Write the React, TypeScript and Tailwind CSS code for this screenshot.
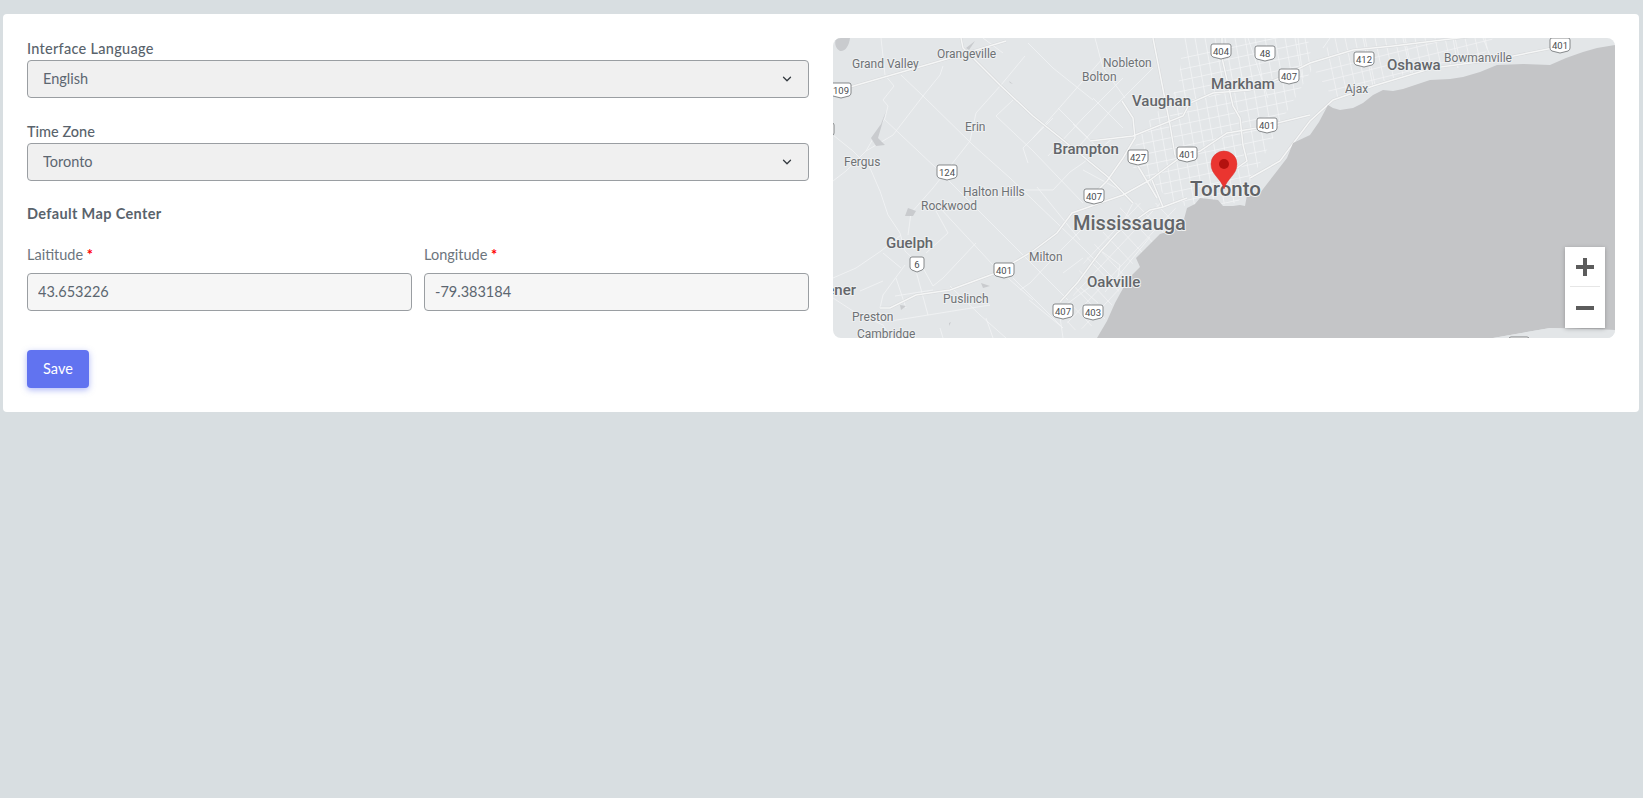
import React from "react";
import { ChevronDown } from "lucide-react";

const COAST = "M264,300 L274,283 282,265 288,254 296,240 307,229 303,220 314,209 327,196 340,192 350,185 354,170 362,166 367,160 385,162 390,168 400,168 407,167 412,168 414,157 427,155 444,133 454,120 460,105 477,97 486,84 495,67 500,70 507,72 520,70 530,65 540,57 550,52 560,53 570,51 585,46 597,42 617,41 630,39 647,34 664,27 690,26 717,27 733,20 750,14 764,10 782,7 L782,292 717,290 660,300 Z";

const HIGHWAYS_LINES = [
  "M47,270 L57,270 83,257 117,252 163,235 200,213 224,195 239,175 270,164 290,157 317,142 337,127 344,122 367,113 394,95 424,90 477,77",
  "M320,0 L337,87 342,117",
  "M257,103 L300,98 350,78 357,65 380,55 417,52 447,40 477,25 520,12 560,8 650,-3",
  "M389,0 L389,20 400,68 407,80 410,107 414,123 404,130",
  "M227,264 L245,244 267,214 284,195 317,172 330,169 354,160",
  "M289,63 L300,80 302,100 290,120 274,143 262,155",
  "M302,123 L324,160",
  "M128,0 L130,10 167,47 200,78 230,102 275,139 300,165",
  "M17,49 L107,23 173,3",
  "M417,140 L447,123 477,83 500,62 540,48 600,30 660,22 720,10",
  "M319,142 L330,169",
];

const ROADS = [
  "M68,37 L90,58 140,107 177,140 250,210 290,250",
  "M110,28 L107,37 90,58 60,97 33,113 13,133 0,143",
  "M48,0 L52,37 61,48 50,62 55,68 52,80 33,113",
  "M50,80 L103,130 133,160 183,210 235,262",
  "M168,47 L143,75 137,103 100,150 78,175 75,197",
  "M192,18 L168,47",
  "M180,62 L163,78 200,113 250,165",
  "M0,97 L20,113 37,130 47,153 55,177 67,195 72,213 90,230 100,248",
  "M103,173 L115,195 93,215",
  "M143,205 L110,240 100,248",
  "M0,240 L23,230 48,213 68,197",
  "M72,227 L50,257 47,270",
  "M50,215 L68,230",
  "M63,240 L73,270",
  "M83,233 L95,277",
  "M27,253 L50,243",
  "M62,258 L100,252",
  "M0,260 L20,273 50,287 58,300",
  "M58,283 L157,267",
  "M107,290 L110,300",
  "M153,280 L160,300",
  "M117,248 L147,277 173,300",
  "M107,170 L160,227 200,262",
  "M180,240 L200,260 230,290",
  "M187,152 L220,152 237,134 250,125 280,100",
  "M250,132 L287,152 300,165 284,195",
  "M267,212 L287,227 285,239",
  "M230,300 L227,279",
  "M272,254 L317,199",
  "M187,252 L197,245 230,210 250,190",
  "M204,149 L247,202",
  "M230,269 L262,245",
  "M247,249 L265,265",
  "M230,235 L250,220",
  "M196,262 L230,290",
  "M200,100 L235,60 270,20",
  "M215,118 L250,80 290,40",
  "M240,115 L280,70 320,30",
  "M195,125 L190,110 220,80",
  "M240,86 L265,110",
  "M225,70 L255,100",
  "M260,60 L290,90",
  "M262,0 L270,30 292,60",
  "M195,5 L220,30 260,62",
  "M150,0 L170,15",
  "M415,0 L435,60",
  "M465,0 L470,40",
  "M497,0 L490,10",
  "M530,0 L540,48",
  "M570,0 L578,35",
  "M620,0 L625,30",
  "M650,0 L660,25",
];

const HIGHWAY_SIGNS: [number, number, string][] = [
  [8, 52, "109"], [-9, 92, ""], [114, 134, "124"], [305, 119, "427"], [354, 116, "401"], [261, 158, "407"],
  [84, 226, "6"], [171, 232, "401"], [230, 273, "407"], [260, 274, "403"], [388, 13, "404"], [432, 15, "48"],
  [456, 38, "407"], [531, 21, "412"], [434, 87, "401"], [727, 7, "401"], [686, 306, ""],
];

const SMALL: [number, number, string][] = [
  [104, 20, "Orangeville"], [19, 30, "Grand Valley"], [270, 29, "Nobleton"], [249, 43, "Bolton"], [132, 93, "Erin"],
  [11, 128, "Fergus"], [130, 158, "Halton Hills"], [88, 172, "Rockwood"], [196, 223, "Milton"], [110, 265, "Puslinch"],
  [19, 283, "Preston"], [24, 300, "Cambridge"], [611, 24, "Bowmanville"], [512, 55, "Ajax"],
];

const MEDIUM: [number, number, string][] = [
  [299, 68, "Vaughan"], [378, 51, "Markham"], [220, 116, "Brampton"], [53, 210, "Guelph"], [254, 249, "Oakville"], [554, 32, "Oshawa"],
];

const TORONTO_V = [292, 302, 312, 322, 332, 342, 352, 362, 372, 382, 392, 402, 412, 422, 432, 442, 452, 462, 472];
const TORONTO_H = [10, 21, 32, 43, 54, 65, 76, 87, 98, 109, 120, 131, 142, 153, 164];
const PEEL_A = [-60, -50, -40, -30, -20, -10, 0, 10, 20, 30, 40, 50, 60];

function MapDrawing() {
  return (
    <svg viewBox="0 0 782 300" className="block h-full w-full">
      <defs>
        <clipPath id="toronto-grid">
          <path d="M295,125 L310,90 345,50 350,0 475,0 480,30 450,80 430,120 405,165 345,168 Z" />
        </clipPath>
        <clipPath id="peel-grid">
          <path d="M232,295 L245,235 262,205 290,165 340,165 350,185 300,225 270,285 Z" />
        </clipPath>
        <clipPath id="east-grid">
          <path d="M480,30 L500,60 560,40 650,20 660,0 500,0 Z" />
        </clipPath>
      </defs>
      <rect width="782" height="300" fill="#e3e6e8" />
      <g fill="none" stroke="#f3f4f5" strokeWidth="0.8">
        {ROADS.map((d) => <path key={d} d={d} />)}
      </g>
      <g stroke="#f3f4f5" strokeWidth="0.75" clipPath="url(#toronto-grid)">
        {TORONTO_V.map((x) => <line key={x} x1={x} y1={0} x2={x + 30} y2={170} />)}
        {TORONTO_H.map((y) => <line key={y} x1={280} y1={y + 25} x2={490} y2={y - 20} />)}
      </g>
      <g stroke="#f3f4f5" strokeWidth="0.7" clipPath="url(#peel-grid)">
        {PEEL_A.map((o) => <line key={o} x1={200 + o * 2} y1={120} x2={370 + o * 2} y2={300} />)}
        {PEEL_A.map((o) => <line key={o} x1={200 + o * 2} y1={300} x2={370 + o * 2} y2={120} />)}
      </g>
      <g stroke="#f3f4f5" strokeWidth="0.7" clipPath="url(#east-grid)">
        {TORONTO_V.map((x) => <line key={x} x1={x + 200} y1={0} x2={x + 215} y2={70} />)}
        {TORONTO_H.map((y) => <line key={y} x1={480} y1={y + 25} x2={660} y2={y - 20} />)}
      </g>
      <g fill="none" stroke="#d7d9db" strokeWidth="2.6">
        {HIGHWAYS_LINES.map((d) => <path key={d} d={d} />)}
      </g>
      <g fill="none" stroke="#f5f6f6" strokeWidth="1.5">
        {HIGHWAYS_LINES.map((d) => <path key={d} d={d} />)}
      </g>
      <g fill="#c9cbce">
        <path d="M3,0 L17,0 C16,8 12,14 7,13 C3,11 1,6 3,0 Z" />
        <path d="M53,73 L48,86 38,100 43,108 52,107 45,100 50,83 Z" />
        <path d="M133,10 L142,3 136,12 Z" />
        <path d="M75,170 L83,173 80,178 72,178 Z" />
        <path d="M148,245 L157,248 150,250 Z" />
        <path d="M67,267 L73,268 68,272 Z" />
        <path d="M176,43 L180,46 177,45 Z" />
        <path d="M116,285 L118,284 116,288 Z" />
      </g>
      <path d={COAST} fill="#c4c5c7" />
      <path d="M660,300 L717,290 782,292 782,300 Z" fill="#e3e6e8" />
      <g fontFamily="Roboto, sans-serif" textAnchor="middle" fontSize="9.5" fill="#4a4d50">
        {HIGHWAY_SIGNS.map(([x, y, t]) => (
          <g key={`${x}-${y}`} transform={`translate(${x},${y})`}>
            <path
              d={t.length === 1 ? "M-5,-7 H5 Q7,-7 7,-5 V3 Q7,5 5,6 L0,8 -5,6 Q-7,5 -7,3 V-5 Q-7,-7 -5,-7 Z" : "M-8,-7 H8 Q10,-7 10,-5 V3 Q10,5 8,6 L0,8 -8,6 Q-10,5 -10,3 V-5 Q-10,-7 -8,-7 Z"}
              fill="#ffffff"
              stroke="#6a6d70"
              strokeWidth="0.8"
            />
            {t ? <text x="0" y="3.5">{t}</text> : null}
          </g>
        ))}
      </g>
      <g fontFamily="Roboto, sans-serif" stroke="#eef0f1" strokeWidth="2" paintOrder="stroke" strokeLinejoin="round">
        {SMALL.map(([x, y, t]) => <text key={t} x={x} y={y} fontSize="12" fill="#6f7275">{t}</text>)}
        {MEDIUM.map(([x, y, t]) => <text key={t} x={x} y={y} fontSize="15" fontWeight="500" fill="#63666a">{t}</text>)}
        <text x="23" y="257" fontSize="15" fontWeight="500" fill="#63666a" textAnchor="end">Kitchener</text>
        <text x="240" y="192" fontSize="20" fontWeight="500" fill="#63666a">Mississauga</text>
        <text x="357" y="158" fontSize="20.5" fontWeight="500" fill="#5f6266">Toronto</text>
      </g>
      <path d="M391,151 C388,140 378,137 378,126 A13,13 0 0 1 404,126 C404,137 394,140 391,151 Z" fill="#ea3530" stroke="#d9302c" strokeWidth="0.5" />
      <circle cx="391" cy="126" r="5" fill="#b3120f" />
    </svg>
  );
}

function SelectField({ label, value, labelClass }: { label: string; value: string; labelClass?: string }) {
  return (
    <div className="mb-6">
      <label className={`block pb-[2px] text-[14.5px] font-medium leading-[19px] text-[#59636c] ${labelClass ?? ""}`}>{label}</label>
      <div className="relative">
        <select
          defaultValue={value}
          className="block h-[38px] w-full appearance-none rounded border border-[#9a9ea2] bg-[#f0f0f0] pl-[15px] pr-8 text-[14.5px] text-[#5c6670] outline-none"
        >
          <option>{value}</option>
        </select>
        <ChevronDown className="pointer-events-none absolute right-[15px] top-[12px] h-[14px] w-[14px] text-[#343a40]" strokeWidth={2.2} />
      </div>
    </div>
  );
}

function CoordField({ label, value }: { label: string; value: string }) {
  return (
    <div>
      <label className="mb-2 block text-[14.5px] leading-[21px] text-[#6c757d]">
        {label} <span className="font-bold text-[#ff0000]">*</span>
      </label>
      <input
        defaultValue={value}
        className="block h-[38px] w-full rounded border border-[#9a9ea2] bg-[#f6f6f6] px-[10px] pb-[2px] text-[14.5px] text-[#5c6670] outline-none"
      />
    </div>
  );
}

export default function App() {
  return (
    <div className="min-h-[798px] bg-[#d8dee1] pb-px pl-[3px] pr-[4px] pt-[14px] font-['Lato',sans-serif]">
      <div className="grid grid-cols-2 gap-6 rounded bg-white p-6">
        <div className="pt-px">
          <SelectField label="Interface Language" value="English" labelClass="tracking-[0.28px]" />
          <SelectField label="Time Zone" value="Toronto" />
          <h2 className="-mt-[2px] mb-[20px] text-[14.5px] font-bold leading-[21px] tracking-[0.35px] text-[#59636c]">Default Map Center</h2>
          <div className="grid grid-cols-2 gap-3">
            <CoordField label="Laititude" value="43.653226" />
            <CoordField label="Longitude" value="-79.383184" />
          </div>
          <button className="mt-[39px] block h-[38px] w-[62px] rounded bg-[#6173f0] text-[14.5px] text-white shadow-[0_2px_6px_rgba(97,115,240,0.5)]">
            Save
          </button>
        </div>
        <div className="relative h-[300px] overflow-hidden rounded-lg">
          <MapDrawing />
          <div className="absolute bottom-[10px] right-[10px] flex h-[81px] w-[40px] flex-col items-center bg-white shadow-[0_1px_4px_rgba(0,0,0,0.25)]">
            <svg viewBox="0 0 18 18" className="mt-[11px] h-[18px] w-[18px]">
              <path d="M7,0 H11 V7 H18 V11 H11 V18 H7 V11 H0 V7 H7 Z" fill="#5c5c5c" />
            </svg>
            <div className="mt-[10px] h-px w-[30px] bg-[#e6e6e6]" />
            <svg viewBox="0 0 18 4" className="mt-[19px] h-[4px] w-[18px]">
              <rect width="18" height="4" fill="#5c5c5c" />
            </svg>
          </div>
        </div>
      </div>
    </div>
  );
}
